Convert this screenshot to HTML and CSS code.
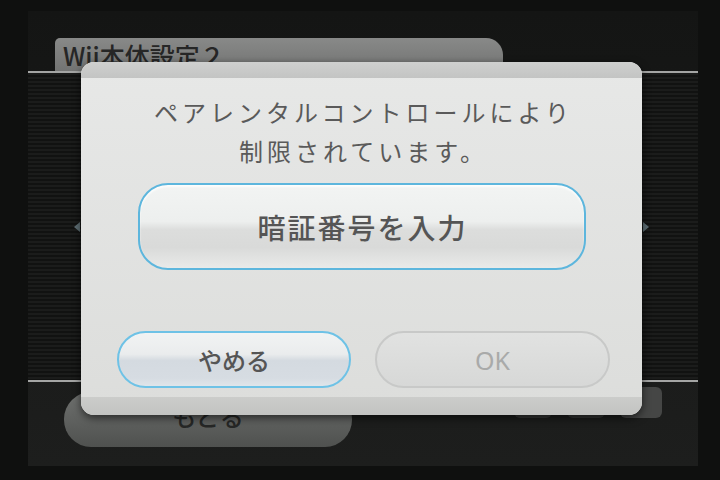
FILE: index.html
```html
<!DOCTYPE html>
<html lang="ja">
<head>
<meta charset="utf-8">
<title>Wii本体設定２</title>
<link rel="stylesheet" href="styles.css">
</head>
<body>
<div class="page">
  <div class="screen">
    <header class="top">
      <div class="tab"><span>Wii本体設定２</span></div>
    </header>
    <div class="rule"></div>
    <main class="stage">
      <span class="arrow arrow-left"></span>
      <span class="arrow arrow-right"></span>
    </main>
    <div class="rule"></div>
    <footer class="bottom">
      <div class="back">もどる</div>
      <div class="pager"><span></span><span></span><span class="last"></span></div>
    </footer>

    <div class="dialog">
      <div class="dialog-cap"></div>
      <p class="message">ペアレンタルコントロールにより<br>制限されています。</p>
      <div class="primary">暗証番号を入力</div>
      <div class="actions">
        <div class="btn cancel">やめる</div>
        <div class="btn ok">OK</div>
      </div>
      <div class="dialog-base"></div>
    </div>
  </div>
</div>
</body>
</html>
```

FILE: styles.css
```css
html, body {
  margin: 0;
  padding: 0;
}
body {
  width: 720px;
  height: 480px;
  overflow: hidden;
  background: #0f100f;
  font-family: "Noto Sans CJK JP", "Noto Sans", sans-serif;
}
.page {
  padding: 11px 22px 14px 28px;
}
.screen {
  position: relative;
  width: 670px;
  height: 455px;
  display: flex;
  flex-direction: column;
  background: linear-gradient(#141514, #1d1e1d);
}
.top {
  height: 60px;
  flex: none;
  display: flex;
  align-items: flex-end;
  padding-left: 27px;
}
.tab {
  width: 448px;
  height: 33px;
  border-radius: 5px 17px 0 0;
  background: linear-gradient(#888988, #737473);
  box-sizing: border-box;
  padding-left: 8px;
  padding-top: 1px;
  font-size: 25px;
  font-weight: 500;
  line-height: 33px;
  color: #262626;
  white-space: nowrap;
}
.rule {
  height: 2px;
  flex: none;
  background: #a4a5a4;
}
.stage {
  height: 307px;
  flex: none;
  display: flex;
  align-items: center;
  justify-content: space-between;
  padding: 0 49px 0 46px;
  background: repeating-linear-gradient(to bottom, #1b1c1b 0 2px, #111211 2px 4px);
}
.arrow {
  width: 0;
  height: 0;
  border-top: 5px solid transparent;
  border-bottom: 5px solid transparent;
}
.arrow-left {
  border-right: 6px solid #5d6d73;
}
.arrow-right {
  border-left: 6px solid #5d6d73;
}
.bottom {
  flex: 1;
  display: flex;
  align-items: flex-start;
}
.back {
  margin: 10px 0 0 36px;
  width: 288px;
  height: 55px;
  box-sizing: border-box;
  padding-bottom: 8px;
  border-radius: 27px;
  background: linear-gradient(#6f716f, #4f514f);
  display: flex;
  align-items: center;
  justify-content: center;
  font-size: 24px;
  font-weight: 500;
  color: #262726;
}
.pager {
  margin: 5px 36px 0 auto;
  display: flex;
  gap: 15px;
}
.pager span {
  width: 38px;
  height: 31px;
  border-radius: 6px;
  background: #353635;
}
.pager .last {
  width: 42px;
  background: #454645;
}

/* dialog overlay */
.dialog {
  position: absolute;
  left: 53px;
  top: 51px;
  width: 561px;
  height: 353px;
  border-radius: 13px;
  overflow: hidden;
  display: flex;
  flex-direction: column;
  background: linear-gradient(#e7e8e7, #dcdddb);
  box-shadow: 0 3px 8px rgba(0, 0, 0, 0.6);
}
.dialog-cap {
  height: 16px;
  flex: none;
  background: linear-gradient(#cfd0cf, #c3c4c3);
}
.message {
  margin: 14px 0 0;
  padding-left: 4px;
  font-size: 24px;
  line-height: 39px;
  letter-spacing: 4px;
  text-align: center;
  color: #5a5a5a;
}
.primary {
  align-self: center;
  margin-top: 13px;
  width: 448px;
  height: 87px;
  flex: none;
  box-sizing: border-box;
  border: 2.5px solid #5db6dd;
  border-radius: 30px;
  background: linear-gradient(#f2f4f3 0%, #edefee 44%, #dcdddc 54%, #d9dad9 75%, #e9eae9 100%);
  box-shadow: inset 0 2px 2px rgba(255, 255, 255, 0.8);
  display: flex;
  align-items: center;
  justify-content: center;
  padding-left: 2px;
  font-size: 28px;
  font-weight: 500;
  letter-spacing: 2px;
  color: #555555;
}
.actions {
  margin-top: 61px;
  padding-left: 36px;
  display: flex;
  gap: 24px;
}
.btn {
  width: 234px;
  height: 57px;
  box-sizing: border-box;
  border-radius: 29px;
  display: flex;
  align-items: center;
  justify-content: center;
  font-size: 24px;
}
.cancel {
  border: 2px solid #6ec2e6;
  background: linear-gradient(#f1f3f3 0%, #eaeced 40%, #d4dae0 52%, #d6dce2 85%, #dfe5ea 100%);
  color: #555555;
  font-weight: 500;
}
.ok {
  width: 235px;
  border: 2px solid #c8c9c8;
  background: linear-gradient(#e1e2e1 0%, #dcdddc 50%, #d7d8d7 100%);
  color: #a9aaa9;
  font-family: "Noto Sans", sans-serif;
  font-size: 25px;
}
.dialog-base {
  margin-top: auto;
  height: 18px;
  flex: none;
  background: linear-gradient(#cbccca, #c2c3c1);
}
```
